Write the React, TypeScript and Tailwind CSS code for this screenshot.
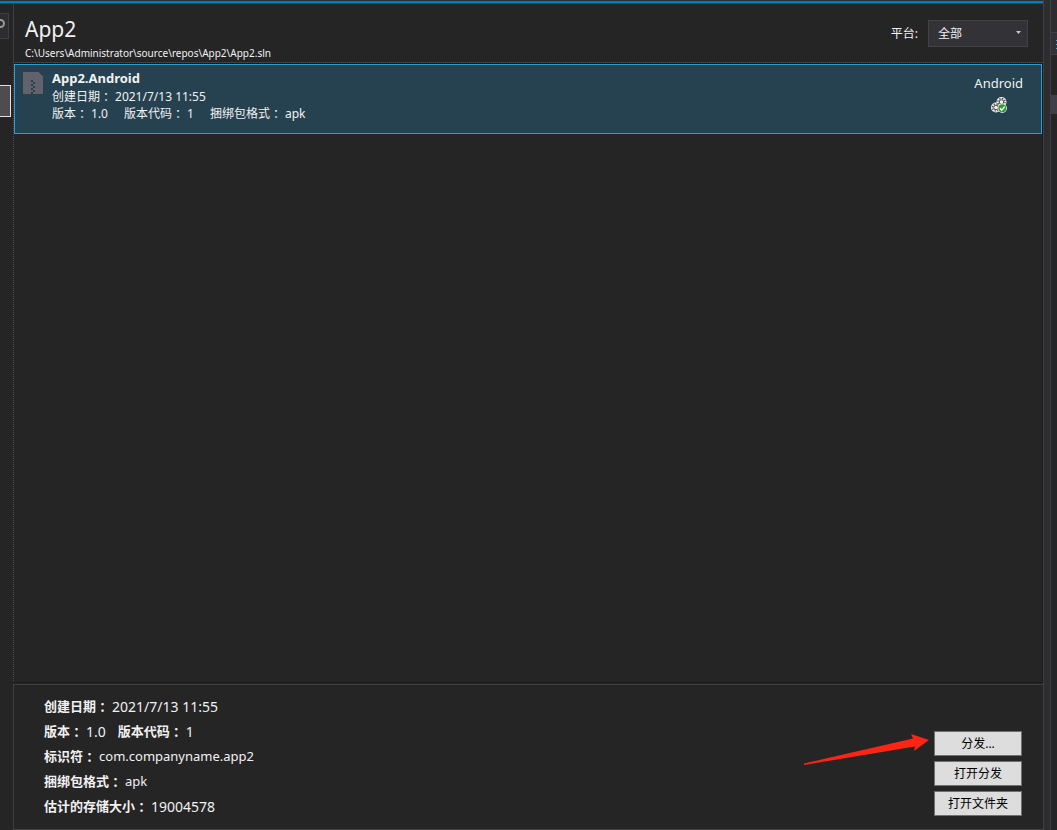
import { useState } from 'react';

type Archive = {
    name: string;
    created: string;
    version: string;
    versionCode: string;
    identifier: string;
    format: string;
    size: string;
    platform: string;
};

const archive: Archive = {
    name: 'App2.Android',
    created: '2021/7/13 11:55',
    version: '1.0',
    versionCode: '1',
    identifier: 'com.companyname.app2',
    format: 'apk',
    size: '19004578',
    platform: 'Android',
};

const actions = ['分发...', '打开分发', '打开文件夹'];

// The TC face keeps the full-width colon in the middle of its box
function Colon() {
    return <span className="align-[-1px] font-['Noto_Sans_CJK_TC',sans-serif] leading-none">：</span>;
}

function Field({ label, value }: { label: string, value: string }) {
    return (
        <div className="flex items-center gap-[3px]">
            <dt>{label}<Colon /></dt>
            <dd>{value}</dd>
        </div>
    );
}

function DetailField({ label, value, small }: { label: string, value: string, small?: boolean }) {
    return (
        <div className="flex h-[25px] items-center gap-[3px]">
            <dt className="text-[13px] font-bold">{label}<Colon /></dt>
            <dd className={small ? 'text-[13px]' : 'text-[14px]'}>{value}</dd>
        </div>
    );
}

function ZipIcon() {
    return (
        <svg width="20" height="22" viewBox="0 0 20 22" shapeRendering="crispEdges" aria-hidden="true">
            <path d="M0 0h15l5 5v17H0z" fill="#62626c" />
            <path
                d="M8 8h2v2H8zM10 10h2v2h-2zM8 12h2v2H8zM10 14h2v2h-2zM8 16h2v2H8zM10 18h2v2h-2zM8 20h2v2H8z"
                fill="#264250"
            />
        </svg>
    );
}

function GearsIcon() {
    return (
        <svg width="16" height="16" viewBox="0 0 16 16" aria-hidden="true">
            <circle cx="10.5" cy="5" r="5" fill="#f1f1f1" />
            <circle cx="5" cy="10.5" r="5" fill="#f1f1f1" />
            <circle cx="10.5" cy="5" r="3.6" fill="none" stroke="#424242" strokeWidth="1.2" strokeDasharray="1.4 1.43" />
            <circle cx="10.5" cy="5" r="2.3" fill="none" stroke="#424242" strokeWidth="1" />
            <circle cx="5" cy="10.5" r="3.6" fill="none" stroke="#424242" strokeWidth="1.2" strokeDasharray="1.4 1.43" />
            <circle cx="5" cy="10.5" r="2.3" fill="none" stroke="#424242" strokeWidth="1" />
            <circle cx="11.3" cy="11.3" r="4.7" fill="#f1f1f1" />
            <circle cx="11.3" cy="11.3" r="4" fill="#339933" />
            <path d="M9 11.3l1.7 1.8 3-3.5" fill="none" stroke="#fff" strokeWidth="1.4" />
        </svg>
    );
}

function Pointer() {
    return (
        <svg
            className="pointer-events-none absolute top-[48px] right-[113px]"
            width="127"
            height="34"
            viewBox="0 0 127 34"
            aria-hidden="true"
        >
            <path d="M1 30.5L110 5.5L108 1L126 7L111 18L112 13.5L1 32z" fill="#ff2414" />
        </svg>
    );
}

export default function App() {
    const [platform, setPlatform] = useState('all');

    return (
        <div className="flex min-h-screen bg-[#252526] font-['Noto_Sans','Noto_Sans_CJK_SC',sans-serif] text-[#f1f1f1]">
            <div className="flex min-w-0 flex-1 flex-col border-t border-[#2d2d30]">
                <div className="h-[2px] bg-[#007acc]" />
                <div className="flex flex-1 border-t border-[#3f3f46]">
                    <aside className="w-[13px] shrink-0 pt-[9px]">
                        <div className="h-[26px] w-[9px] overflow-hidden border border-l-0 border-[#3f3f46] bg-[#2d2d30]">
                            <svg width="8" height="24" viewBox="0 0 8 24" aria-hidden="true">
                                <circle cx="0.5" cy="9.5" r="3.5" fill="none" stroke="#999" strokeWidth="2" />
                            </svg>
                        </div>
                        <div className="mt-[46px] h-[32px] w-[11px] border border-l-0 border-[#e0e0e0] bg-[#4d4d4d]" />
                    </aside>

                    <main className="flex min-w-0 flex-1 flex-col">
                        <header className="flex h-[59px] items-start justify-between border-b border-l border-[#3f3f46] pr-[15px] pl-[11px]">
                            <div>
                                <h1 className="pt-[11px] text-[21px] leading-[28px]">App2</h1>
                                <p className="pt-[2px] text-[10px] leading-[16px]">C:\Users\Administrator\source\repos\App2\App2.sln</p>
                            </div>
                            <div className="flex items-center gap-[10px] pt-[16px] text-[12px]">
                                <label htmlFor="platform">平台:</label>
                                <div className="relative">
                                    <select
                                        id="platform"
                                        value={platform}
                                        onChange={e => setPlatform(e.target.value)}
                                        className="h-[27px] w-[100px] appearance-none border border-[#434346] bg-[#333337] pl-[9px]"
                                    >
                                        <option value="all">全部</option>
                                        <option value="android">Android</option>
                                    </select>
                                    <svg
                                        className="pointer-events-none absolute top-[11px] right-[7px]"
                                        width="5"
                                        height="3"
                                        viewBox="0 0 5 3"
                                        aria-hidden="true"
                                    >
                                        <path d="M0 0h5L2.5 3z" fill="#c8c8c8" />
                                    </svg>
                                </div>
                            </div>
                        </header>

                        <section className="flex-1 border border-dotted border-[#111111] border-l-[#4a4a50]">
                            <article className="flex h-[70px] justify-between border border-[#2a9dd8] bg-[#264250] pr-[18px] pl-[8px]">
                                <div className="flex gap-[9px] pt-[7px]">
                                    <ZipIcon />
                                    <div className="text-[12px] leading-[17px]">
                                        <h2 className="-mt-[2px] pb-[2px] text-[13px] leading-[16px] font-bold">{archive.name}</h2>
                                        <dl>
                                            <Field label="创建日期" value={archive.created} />
                                            <div className="flex gap-[16px]">
                                                <Field label="版本" value={archive.version} />
                                                <Field label="版本代码" value={archive.versionCode} />
                                                <Field label="捆绑包格式" value={archive.format} />
                                            </div>
                                        </dl>
                                    </div>
                                </div>
                                <div className="flex flex-col items-center gap-[5px] pt-[9px] text-[13px] leading-[18px]">
                                    {archive.platform}
                                    <GearsIcon />
                                </div>
                            </article>
                        </section>

                        <footer className="relative mt-px flex justify-between border-y border-l border-[#3f3f46] pr-[21px] pl-[30px]">
                            <dl className="pt-[9px] pb-[10px]">
                                <DetailField label="创建日期" value={archive.created} />
                                <div className="flex gap-[12px]">
                                    <DetailField label="版本" value={archive.version} />
                                    <DetailField label="版本代码" value={archive.versionCode} />
                                </div>
                                <DetailField label="标识符" value={archive.identifier} small />
                                <DetailField label="捆绑包格式" value={archive.format} small />
                                <DetailField label="估计的存储大小" value={archive.size} />
                            </dl>
                            <div className="flex flex-col justify-end gap-[5px] pb-[13px]">
                                {actions.map(action => (
                                    <button
                                        key={action}
                                        type="button"
                                        className="h-[25px] w-[88px] border border-[#707070] bg-[#dddddd] text-[12px] text-black"
                                    >
                                        {action}
                                    </button>
                                ))}
                            </div>
                            <Pointer />
                        </footer>
                    </main>
                </div>
            </div>

            <div className="w-[8px] shrink-0 border-x border-[#3f3f46] bg-[#2d2d30]" />
            <aside className="w-[6px] shrink-0">
                <div className="h-[32px] bg-[#2d2d30]" />
                <div className="flex h-[23px] flex-col gap-[3px] border-y border-[#3f3f46] bg-[#333337] pt-[7px] pl-[5px]">
                    <div className="h-px bg-[#4f9fcf]" />
                    <div className="h-px bg-[#4f9fcf]" />
                    <div className="h-px bg-[#4f9fcf]" />
                </div>
                <div className="mt-[40px] h-[19px] bg-[#3f3f46]" />
            </aside>
        </div>
    );
}
